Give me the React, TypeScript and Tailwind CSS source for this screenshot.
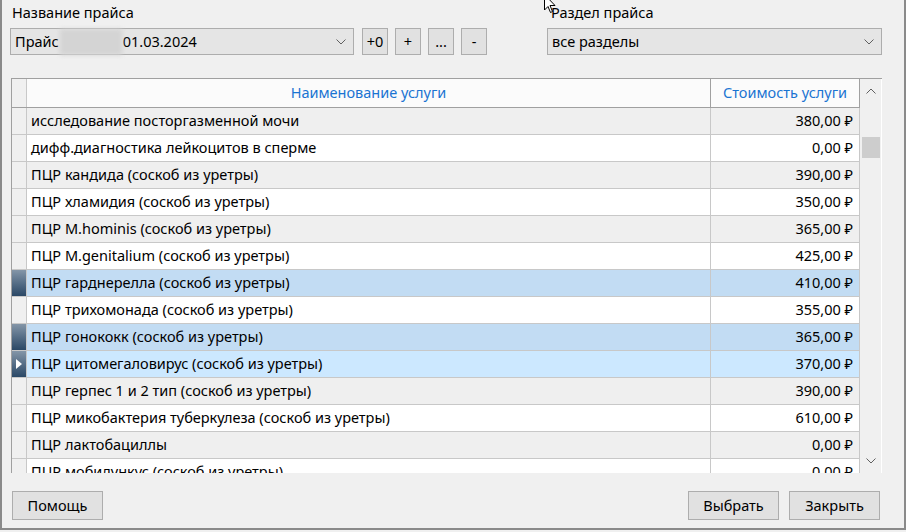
const rows = [
  { name: "исследование посторгазменной мочи", price: "380,00 ₽" },
  { name: "дифф.диагностика лейкоцитов в сперме", price: "0,00 ₽" },
  { name: "ПЦР кандида (соскоб из уретры)", price: "390,00 ₽" },
  { name: "ПЦР хламидия (соскоб из уретры)", price: "350,00 ₽" },
  { name: "ПЦР M.hominis (соскоб из уретры)", price: "365,00 ₽" },
  { name: "ПЦР M.genitalium (соскоб из уретры)", price: "425,00 ₽" },
  { name: "ПЦР гарднерелла (соскоб из уретры)", price: "410,00 ₽", selected: true },
  { name: "ПЦР трихомонада (соскоб из уретры)", price: "355,00 ₽" },
  { name: "ПЦР гонококк (соскоб из уретры)", price: "365,00 ₽", selected: true },
  { name: "ПЦР цитомегаловирус (соскоб из уретры)", price: "370,00 ₽", current: true },
  { name: "ПЦР герпес 1 и 2 тип (соскоб из уретры)", price: "390,00 ₽" },
  { name: "ПЦР микобактерия туберкулеза (соскоб из уретры)", price: "610,00 ₽" },
  { name: "ПЦР лактобациллы", price: "0,00 ₽" },
  { name: "ПЦР мобилункус (соскоб из уретры)", price: "0,00 ₽" },
];

function Chevron({ up }: { up?: boolean }) {
  return (
    <svg width="10" height="6" viewBox="0 0 10 6" className={up ? "rotate-180" : ""}>
      <path d="M0.5 0.5 L5 5 L9.5 0.5" fill="none" stroke="#606060" strokeWidth="1" />
    </svg>
  );
}

function SmallBtn({ label }: { label: string }) {
  return (
    <button className="flex h-[27px] w-[26px] items-center justify-center border border-[#adadad] bg-[#e1e1e1] text-[14.5px] leading-none text-black">
      {label}
    </button>
  );
}

function FooterBtn({ label }: { label: string }) {
  return (
    <button className="h-[29px] w-[91px] border border-[#adadad] bg-[#e1e1e1] text-[14.5px] text-black">
      {label}
    </button>
  );
}

export default function App() {
  return (
    <div
      className="relative h-[532px] w-[906px] overflow-hidden bg-[#f0f0f0] text-black"
      style={{ fontFamily: '"Segoe UI", "Noto Sans", sans-serif' }}
    >
      <div className="flex h-[530px] flex-col border-x-2 border-b-2 border-[#8a8a8a]">
        {/* top filters */}
        <div className="flex pl-[8px] pt-[2px]">
          <div className="flex flex-col">
            <span className="ml-[2px] h-[26px] text-[14.5px] leading-[21px]">Название прайса</span>
            <div className="flex items-center">
              <div className="flex h-[27px] w-[344px] items-center justify-between border border-[#adadad] bg-[#e5e5e5] pl-[4px] pr-[7px] text-[14.5px]">
                <span className="flex items-center">
                  Прайс
                  <span className="mx-[1px] h-[26px] w-[62px] bg-[#d4d4d4] blur-[2px]" />
                  01.03.2024
                </span>
                <Chevron />
              </div>
              <div className="ml-[8px] flex gap-[7px]">
                <SmallBtn label="+0" />
                <SmallBtn label="+" />
                <SmallBtn label="..." />
                <SmallBtn label="-" />
              </div>
            </div>
          </div>
          <div className="ml-[60px] flex flex-col">
            <span className="ml-[4px] h-[26px] text-[14.5px] leading-[21px]">Раздел прайса</span>
            <div className="flex h-[27px] w-[335px] items-center justify-between border border-[#adadad] bg-[#e5e5e5] pl-[4px] pr-[7px] text-[14.5px]">
              все разделы
              <Chevron />
            </div>
          </div>
        </div>

        {/* grid */}
        <div className="ml-[9px] mt-[23px] flex h-[395px] w-[871px] border-l border-t border-[#a0a0a0] bg-[#f0f0f0]">
          <div className="flex w-[848px] flex-col overflow-hidden">
            <div className="flex h-[29px] shrink-0 border-b border-[#a0a0a0] bg-[#fbfbfb] text-[14.5px] text-[#1a74d2]">
              <div className="w-[15px] border-r border-[#c8c8c8] bg-[#f0f0f0]" />
              <div className="flex w-[684px] items-center justify-center border-r border-[#a0a0a0]">
                Наименование услуги
              </div>
              <div className="flex w-[149px] items-center justify-center border-r border-[#a0a0a0]">
                Стоимость услуги
              </div>
            </div>
            {rows.map((r, i) => {
              const bg = r.current
                ? "bg-[#cce8ff]"
                : r.selected
                  ? "bg-[#c2dcf3]"
                  : i % 2 === 0
                    ? "bg-[#efefef]"
                    : "bg-white";
              return (
                <div key={i} className={`flex h-[27px] shrink-0 border-b border-[#c8c8c8] text-[14.5px] ${bg}`}>
                  <div
                    className={`flex w-[15px] items-center justify-center border-r border-[#c8c8c8] ${
                      r.selected || r.current
                        ? "bg-gradient-to-b from-[#8496a8] to-[#2a4866]"
                        : "bg-[#f0f0f0]"
                    }`}
                  >
                    {r.current && (
                      <svg width="6" height="10" viewBox="0 0 6 10">
                        <path d="M0 0 L6 5 L0 10 Z" fill="#ffffff" />
                      </svg>
                    )}
                  </div>
                  <div className="flex w-[684px] items-center border-r border-[#c8c8c8] pl-[4px]">{r.name}</div>
                  <div className="flex w-[149px] items-center justify-end border-r border-[#c8c8c8] pr-[6px]">
                    {r.price}
                  </div>
                </div>
              );
            })}
          </div>
          {/* scrollbar */}
          <div className="flex w-[22px] flex-col items-center border-r border-white bg-[#f0f0f0]">
            <div className="flex h-[22px] items-center justify-center pt-[2px]">
              <Chevron up />
            </div>
            <div className="mt-[36px] h-[21px] w-[18px] bg-[#cdcdcd]" />
            <div className="flex-1" />
            <div className="flex h-[22px] items-center justify-center pb-[2px]">
              <Chevron />
            </div>
          </div>
        </div>

        {/* footer */}
        <div className="mt-[18px] flex justify-between pl-[10px] pr-[24px]">
          <FooterBtn label="Помощь" />
          <div className="flex gap-[10px]">
            <FooterBtn label="Выбрать" />
            <FooterBtn label="Закрыть" />
          </div>
        </div>
      </div>

      {/* mouse cursor */}
      <svg className="absolute left-[544px] top-[-6px]" width="14" height="22" viewBox="0 0 14 22">
        <path d="M0.5 0.5 L0.5 16 L4 12.5 L6.5 18.5 L8.5 17.5 L6 11.5 L11 11.5 Z" fill="#ffffff" stroke="#000000" strokeWidth="1" />
      </svg>
    </div>
  );
}
